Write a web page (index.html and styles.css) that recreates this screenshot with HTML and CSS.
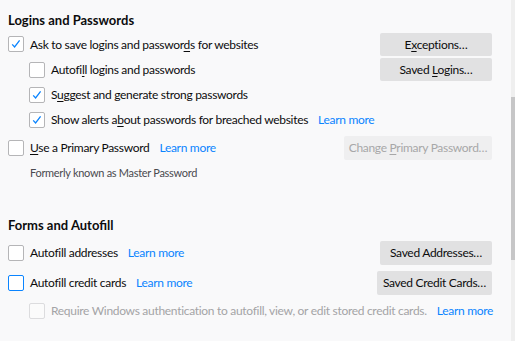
FILE: index.html
```html
<!DOCTYPE html>
<html lang="en">
<head>
  <meta charset="UTF-8">
  <title>Privacy &amp; Security</title>
  <link rel="stylesheet" href="styles.css">
</head>
<body>
  <main class="prefs">
    <!-- Logins -->
    <section class="group">
      <h2>Logins and Passwords</h2>
      <div class="row r1">
        <label class="check"><span class="box on"></span><span>Ask to save logins and passwor<u>d</u>s for websites</span></label>
        <button class="btn">E<u>x</u>ceptions…</button>
      </div>
      <div class="row r2 sub">
        <label class="check"><span class="box"></span><span>Autofi<u>l</u>l logins and passwords</span></label>
        <button class="btn">Saved <u>L</u>ogins…</button>
      </div>
      <div class="row r3 sub">
        <label class="check"><span class="box on"></span><span>S<u>u</u>ggest and generate strong passwords</span></label>
      </div>
      <div class="row r3 sub">
        <label class="check"><span class="box on"></span><span>Show alerts a<u>b</u>out passwords for breached websites</span></label>
        <a class="learn" href="#">Learn more</a>
      </div>
      <div class="row r5">
        <label class="check"><span class="box"></span><span><u>U</u>se a Primary Password</span></label>
        <a class="learn" href="#">Learn more</a>
        <button class="btn wide" disabled>Change <u>P</u>rimary Password…</button>
      </div>
      <p class="note">Formerly known as Master Password</p>
    </section>

    <!-- Forms -->
    <section class="group forms">
      <h2>Forms and Autofill</h2>
      <div class="row r6">
        <label class="check"><span class="box"></span><span>Autofill addresses</span></label>
        <a class="learn" href="#">Learn more</a>
        <button class="btn">Saved Addresses…</button>
      </div>
      <div class="row r7">
        <label class="check"><span class="box focus"></span><span>Autofill credit cards</span></label>
        <a class="learn" href="#">Learn more</a>
        <button class="btn">Saved Credit Cards…</button>
      </div>
      <div class="row r8 sub off">
        <label class="check"><span class="box"></span><span>Require Windows authentication to autofill, view, or edit stored credit cards.</span></label>
        <a class="learn" href="#">Learn more</a>
      </div>
    </section>
  </main>

  <div class="scrollbar"><div class="thumb"></div></div>
</body>
</html>
```

FILE: styles.css
```css
/* Base */
body {
  margin: 0;
  font-family: Lato, 'Open Sans', Arial, sans-serif;
  font-size: 12px;
  letter-spacing: -0.3px;
  color: #0c0c0d;
  background: #f9f9fa;
  overflow: hidden;
}
h2 {
  margin: 0;
  font-size: 13px;
  font-weight: 700;
  letter-spacing: 0;
}
u {
  text-decoration-thickness: 1px;
  text-underline-offset: 2px;
}

/* Layout */
.prefs {
  width: 484px;
  padding: 10px 0 0 8px;
}
.group h2 {
  height: 20px;
  line-height: 20px;
}
.forms {
  margin-top: 36px;
}
.row {
  display: flex;
  align-items: center;
  height: 25px;
  white-space: nowrap;
}
.row.r1 { margin-top: 2px; height: 24px; }
.row.r2 { margin-top: 1px; }
.row.r5 { margin-top: 3px; }
.row.r6 { margin-top: 5px; }
.row.r7 { margin-top: 5px; }
.row.r8 { margin-top: 3px; }
.sub {
  padding-left: 21px;
}
.check {
  display: flex;
  align-items: center;
  gap: 6px;
}
.box {
  width: 14px;
  height: 14px;
  border: 1px solid #b5b5b7;
  border-radius: 2px;
  background: #fff;
  flex: none;
}
.box.on {
  background: #fff url("data:image/svg+xml,%3Csvg xmlns='http://www.w3.org/2000/svg' viewBox='0 0 14 14'%3E%3Cpath d='M3.2 7.4 5.6 10 10.6 3.4' fill='none' stroke='%230a84ff' stroke-width='1.3'/%3E%3C/svg%3E") center / 14px no-repeat;
}
.box.focus {
  border-color: #0a84ff;
}
.learn {
  margin-left: 10px;
  color: #0a84ff;
  text-decoration: none;
}
.btn {
  margin-left: auto;
  width: 112px;
  height: 23px;
  border: none;
  border-radius: 2px;
  background: #e1e1e2;
  color: #0c0c0d;
  font: inherit;
  letter-spacing: inherit;
  padding: 0;
  white-space: nowrap;
}
.btn.wide {
  width: 148px;
  height: 24px;
  background: #efeff0;
  color: #a7a7a8;
}
.r6 .btn, .r7 .btn { height: 24px; }
.r7 .btn { width: 115px; }
.note {
  margin: 6px 0 0 22px;
  font-size: 11px;
  color: #4a4a4f;
}
.off .check {
  color: #a4a4a6;
}
.off .box {
  border-color: #dcdcde;
  background: #fbfbfb;
}

/* Fake scrollbar overlay */
.scrollbar {
  position: fixed;
  top: 0;
  right: 0;
  width: 4px;
  height: 341px;
  background: #efefef;
}
.thumb {
  margin-top: 97px;
  height: 163px;
  background: #c6c6c7;
}
```
